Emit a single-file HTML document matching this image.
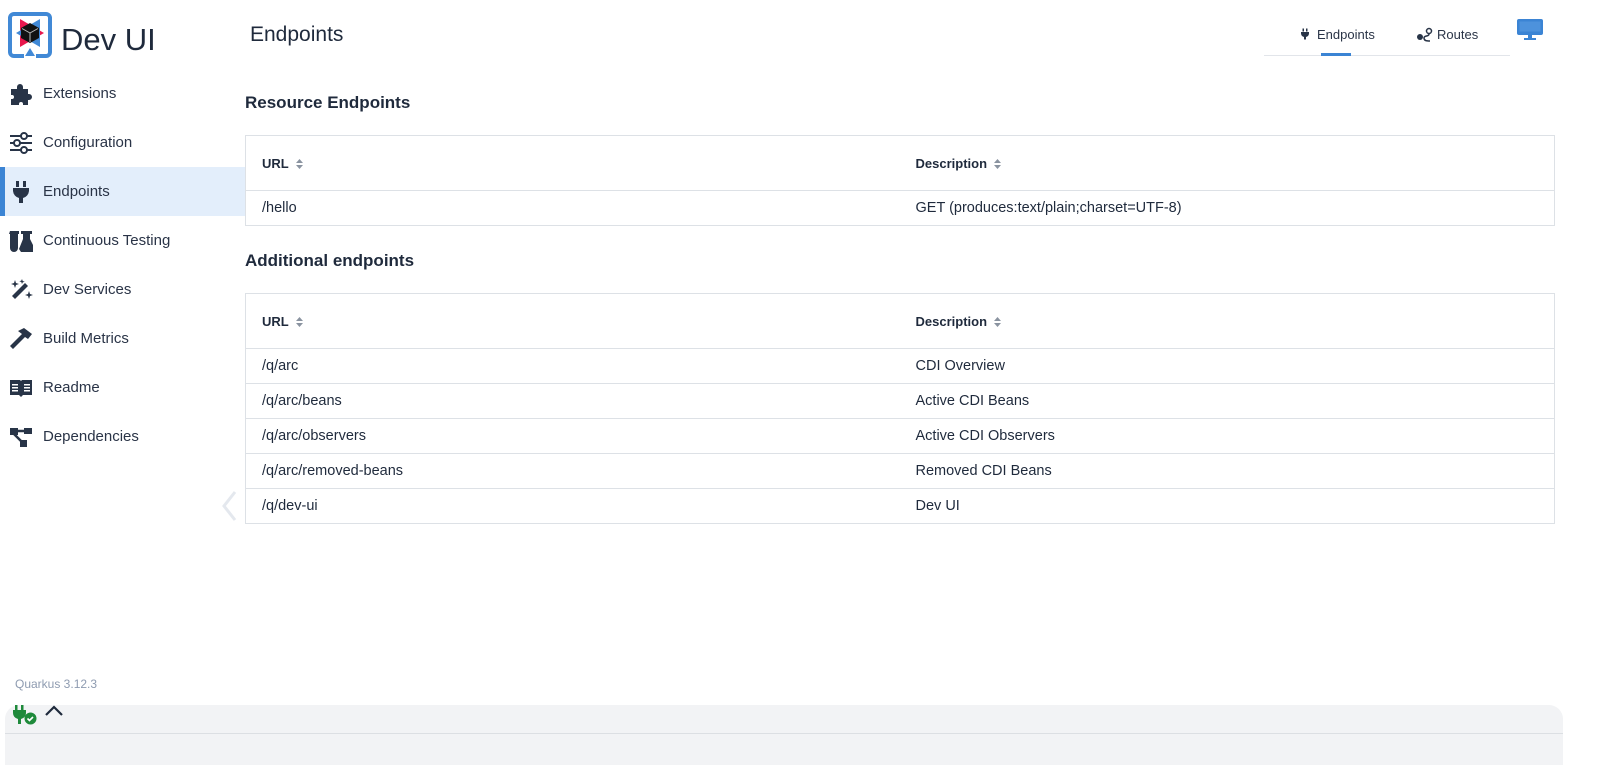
<!DOCTYPE html>
<html><head><meta charset="utf-8"><style>
*{box-sizing:border-box;margin:0;padding:0}
body{width:1600px;height:757px;overflow:hidden;background:#fff;font-family:"Liberation Sans",sans-serif;color:#1f2a3c;position:relative}
.nav{position:absolute;left:0;top:69px;width:245px}
.nav div{height:49px;display:flex;align-items:center;padding-left:9px;font-size:15px;color:#2a3447}
.nav div svg{width:24px;height:24px;margin-right:10px;fill:#283447}
.nav .act{background:#e3eefb;border-left:5px solid #3b84d4;padding-left:4px}
table{border-collapse:collapse;width:1310px;position:absolute;left:245px;border:1px solid #dde1e6;font-size:14.5px}
td,th{text-align:left;padding:0 16px;border-top:1px solid #dde1e6;font-weight:normal}
th{font-weight:bold;font-size:13px;height:55px}
td{height:35px}
.c2{width:654px}
.sort{display:inline-block;width:7px;height:10px;margin-left:7px;vertical-align:-1px}
h2{position:absolute;left:245px;font-size:17px;font-weight:bold;color:#1f2a3c}
</style></head><body>
<svg style="position:absolute;left:8px;top:12px" width="45" height="46" viewBox="0 0 45 46">
<path d="M16 44H6a4 4 0 0 1-4-4V6a4 4 0 0 1 4-4h32a4 4 0 0 1 4 4v34a4 4 0 0 1-4 4H28" fill="none" stroke="#4189d6" stroke-width="4"/>
<polygon points="22,36 17,44 27,44" fill="#4189d6"/>
<polygon points="12,7 36,21 12,35" fill="#e8174d"/>
<polygon points="32,7 8,21 32,35" fill="#4189d6"/>
<polygon points="22,11 31,16 31,26 22,31 13,26 13,16" fill="#111"/>
<path d="M22 21v9M22 21l-8-4.5M22 21l8-4.5" stroke="#bbb" stroke-width="1"/>
</svg>
<div style="position:absolute;left:61px;top:22px;font-size:31px;color:#1f2a3c">Dev UI</div>
<div style="position:absolute;left:250px;top:23px;font-size:21px;color:#1f2a3c">Endpoints</div>
<div class="nav">
<div><svg viewBox="0 0 24 24"><path d="M2 7h6V5a3 3 0 0 1 6 0v2h5v5h1a3 3 0 0 1 0 6h-1v5h-5v-1a2 2 0 0 0-4 0v1H2v-6h1a2 2 0 0 0 0-4H2z"/></svg>Extensions</div>
<div><svg viewBox="0 0 24 24"><path d="M1 4h22v2H1zM1 11h22v2H1zM1 18h22v2H1z"/><circle cx="15" cy="5" r="3" fill="#fff" stroke="#283447" stroke-width="2"/><circle cx="8" cy="12" r="3" fill="#fff" stroke="#283447" stroke-width="2"/><circle cx="15" cy="19" r="3" fill="#fff" stroke="#283447" stroke-width="2"/></svg>Configuration</div>
<div class="act"><svg viewBox="0 0 24 24"><path d="M7 1h3v6H7zM14 1h3v6h-3zM4 8h16v3a8 8 0 0 1-6 7v5h-4v-5a8 8 0 0 1-6-7z"/></svg>Endpoints</div>
<div><svg viewBox="0 0 24 24"><path d="M1 2h9v3H9v14a4 4 0 0 1-8 0V5H0zM12 2h11v3h-2v5l5 10a2 2 0 0 1-2 3H12l-2-3 4-10V5h-2z"/></svg>Continuous Testing</div>
<div><svg viewBox="0 0 24 24"><path d="M16 5l3 3L6 21l-3-3z"/><path d="M6 2l1 3 3 1-3 1-1 3-1-3-3-1 3-1zM20 13l1 3 3 1-3 1-1 3-1-3-3-1 3-1zM13 1l.7 2 2 .7-2 .7L13 6l-.7-2-2-.7 2-.7z"/></svg>Dev Services</div>
<div><svg viewBox="0 0 24 24"><path d="M9 4l6-3 8 6-4 5-3-2-12 12-3-3 12-12-4-3z"/></svg>Build Metrics</div>
<div><svg viewBox="0 0 24 24"><path d="M1 4h10l1 1 1-1h10v15h-9l-2 2-2-2H1z"/><path d="M3 8h6v1.5H3zM3 11h6v1.5H3zM3 14h6v1.5H3zM15 8h6v1.5h-6zM15 11h6v1.5h-6zM15 14h6v1.5h-6z" fill="#fff"/></svg>Readme</div>
<div><svg viewBox="0 0 24 24"><path d="M1 3h8v7H1zM15 3h8v6h-8zM11 15h7v7h-7z"/><path d="M8 6h8M5 9l8 8" stroke="#283447" stroke-width="2.5"/></svg>Dependencies</div>
</div>
<svg style="position:absolute;left:220px;top:490px" width="20" height="32"><path d="M15 2L4 16l11 14" fill="none" stroke="#e4e8ee" stroke-width="3"/></svg>
<div style="position:absolute;left:1264px;top:55px;width:246px;height:1px;background:#e2e5ea"></div>
<div style="position:absolute;left:1321px;top:53px;width:30px;height:3px;background:#3b84d4"></div>
<svg style="position:absolute;left:1299px;top:26px" width="12" height="16" viewBox="0 0 24 24"><path fill="#283447" d="M7 1h3v6H7zM14 1h3v6h-3zM4 8h16v3a8 8 0 0 1-6 7v5h-4v-5a8 8 0 0 1-6-7z"/></svg>
<div style="position:absolute;left:1317px;top:27px;font-size:13px;color:#2a3447">Endpoints</div>
<svg style="position:absolute;left:1416px;top:27px" width="17" height="15" viewBox="0 0 17 15"><circle cx="4" cy="10" r="3" fill="#283447"/><circle cx="13" cy="4" r="2.5" fill="none" stroke="#283447" stroke-width="1.5"/><path d="M13 7c0 3-5 1-5 4s3 3 6 3" fill="none" stroke="#283447" stroke-width="1.5"/></svg>
<div style="position:absolute;left:1437px;top:27px;font-size:13px;color:#2a3447">Routes</div>
<svg style="position:absolute;left:1517px;top:19px" width="26" height="22" viewBox="0 0 26 22"><rect x="0" y="0" width="26" height="16" rx="2" fill="#3b84d4"/><rect x="2.5" y="2.5" width="21" height="10" fill="#4d92dc"/><path d="M11 16h4v3h4v2H7v-2h4z" fill="#3b84d4"/></svg>
<h2 style="top:93px">Resource Endpoints</h2>
<table style="top:135px"><tr><th class="c2">URL<svg class="sort" viewBox="0 0 7 10"><path d="M3.5 0L7 4H0zM0 6h7L3.5 10z" fill="#8a93a0"/></svg></th><th>Description<svg class="sort" viewBox="0 0 7 10"><path d="M3.5 0L7 4H0zM0 6h7L3.5 10z" fill="#8a93a0"/></svg></th></tr>
<tr><td>/hello</td><td>GET (produces:text/plain;charset=UTF-8)</td></tr></table>
<h2 style="top:251px">Additional endpoints</h2>
<table style="top:293px"><tr><th class="c2">URL<svg class="sort" viewBox="0 0 7 10"><path d="M3.5 0L7 4H0zM0 6h7L3.5 10z" fill="#8a93a0"/></svg></th><th>Description<svg class="sort" viewBox="0 0 7 10"><path d="M3.5 0L7 4H0zM0 6h7L3.5 10z" fill="#8a93a0"/></svg></th></tr>
<tr><td>/q/arc</td><td>CDI Overview</td></tr>
<tr><td>/q/arc/beans</td><td>Active CDI Beans</td></tr>
<tr><td>/q/arc/observers</td><td>Active CDI Observers</td></tr>
<tr><td>/q/arc/removed-beans</td><td>Removed CDI Beans</td></tr>
<tr><td>/q/dev-ui</td><td>Dev UI</td></tr></table>
<div style="position:absolute;left:15px;top:677px;font-size:12px;color:#8e9bb0">Quarkus 3.12.3</div>
<div style="position:absolute;left:5px;top:705px;width:1558px;height:60px;background:#f2f3f5;border-radius:14px 14px 0 0"></div>
<div style="position:absolute;left:5px;top:733px;width:1558px;height:1px;background:#dcdfe3"></div>
<svg style="position:absolute;left:12px;top:704px" width="26" height="22" viewBox="0 0 26 22"><path fill="#1f8a3b" d="M3 1h2.5v5H3zM9 1h2.5v5H9zM1 6h13v3a6 6 0 0 1-5 6v5H6v-5a6 6 0 0 1-5-6z"/><circle cx="18.5" cy="14.5" r="6" fill="#1f8a3b"/><path d="M15.5 14.5l2 2 3.5-3.5" stroke="#fff" stroke-width="1.6" fill="none"/></svg>
<svg style="position:absolute;left:44px;top:704px" width="20" height="14"><path d="M2 11l8-8 8 8" fill="none" stroke="#1f2a3c" stroke-width="2.2"/></svg>
</body></html>
